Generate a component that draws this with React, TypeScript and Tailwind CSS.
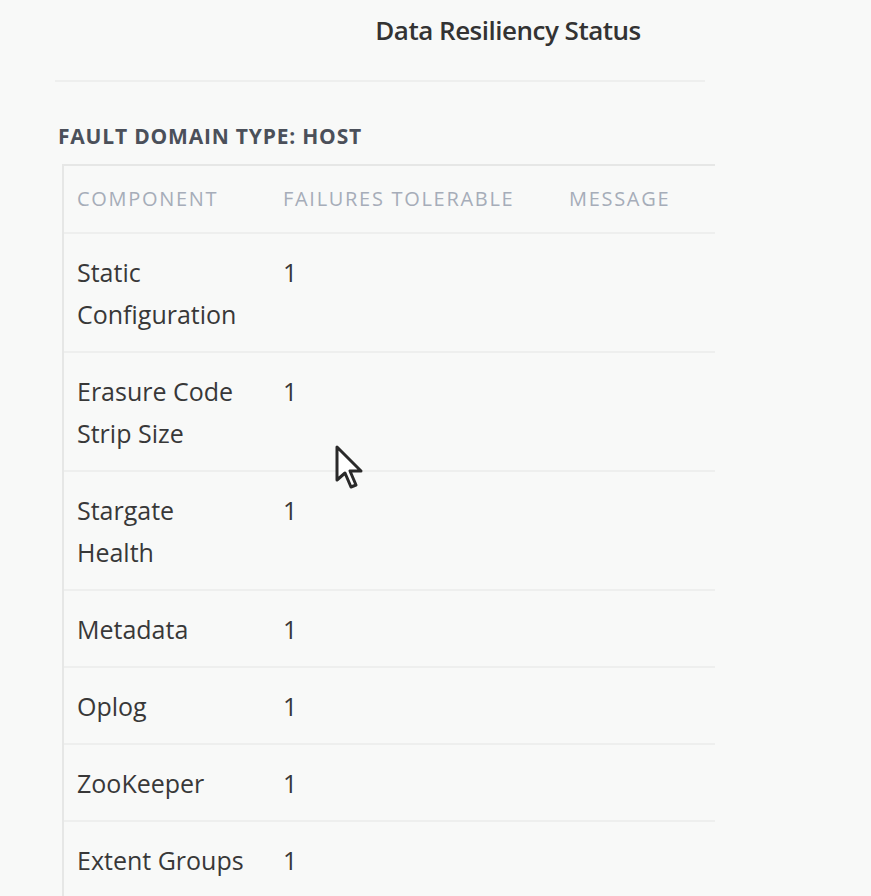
import React from "react";

const rows: { name: string; value: string }[] = [
  { name: "Static Configuration", value: "1" },
  { name: "Erasure Code Strip Size", value: "1" },
  { name: "Stargate Health", value: "1" },
  { name: "Metadata", value: "1" },
  { name: "Oplog", value: "1" },
  { name: "ZooKeeper", value: "1" },
  { name: "Extent Groups", value: "1" },
];

export default function App() {
  return (
    <div
      className="relative w-[871px] h-[896px] overflow-hidden bg-[#f8f9f8] text-[#333]"
      style={{ fontFamily: '"Open Sans", "Liberation Sans", sans-serif' }}
    >
      <div className="w-[961px] pl-[55px]">
        <div className="flex h-[60px] items-center justify-center">
          <h1 className="text-[26px] font-semibold tracking-[-0.5px] text-[#333]">Data Resiliency Status</h1>
        </div>
        <div className="mt-[20px] h-[2px] w-[650px] bg-[#eeefee]" />
        <div className="ml-[3px] mt-[42px] text-[21px] font-bold tracking-[0.8px] text-[#4b505a] leading-[24px]">
          FAULT DOMAIN TYPE: HOST
        </div>
        <div className="ml-[7px] mt-[16px] w-[653px] border-l-2 border-t-2 border-[#e6e7e6] pb-[40px]">
          <div className="grid h-[68px] grid-cols-[206px_286px_1fr] items-center border-b-2 border-[#eeefee] text-[20px] font-medium tracking-[1.7px] text-[#a6adb9]">
            <div className="pl-[13px]">COMPONENT</div>
            <div className="pl-[13px]">FAILURES TOLERABLE</div>
            <div className="pl-[13px]">MESSAGE</div>
          </div>
          {rows.map((r, i) => (
            <div
              key={r.name}
              className={`grid grid-cols-[206px_286px_1fr] items-start py-[16.5px] text-[25px] font-medium leading-[42px] text-[#383838] ${
                i < rows.length - 1 ? "border-b-2 border-[#eeefee]" : ""
              }`}
            >
              <div className="pl-[13px] pr-[17px]">{r.name}</div>
              <div className="pl-[13px]">{r.value}</div>
              <div className="pl-[13px]"></div>
            </div>
          ))}
        </div>
      </div>
      <svg
        className="absolute left-[334px] top-[444px]"
        width="34"
        height="48"
        viewBox="0 0 34 48"
      >
        <path
          d="M3 3 L3 36 L11 29 L17 43 L22 41 L16 27 L27 27 Z"
          fill="#ffffff"
          stroke="#2a2a2a"
          strokeWidth="3"
          strokeLinejoin="round"
        />
      </svg>
    </div>
  );
}
